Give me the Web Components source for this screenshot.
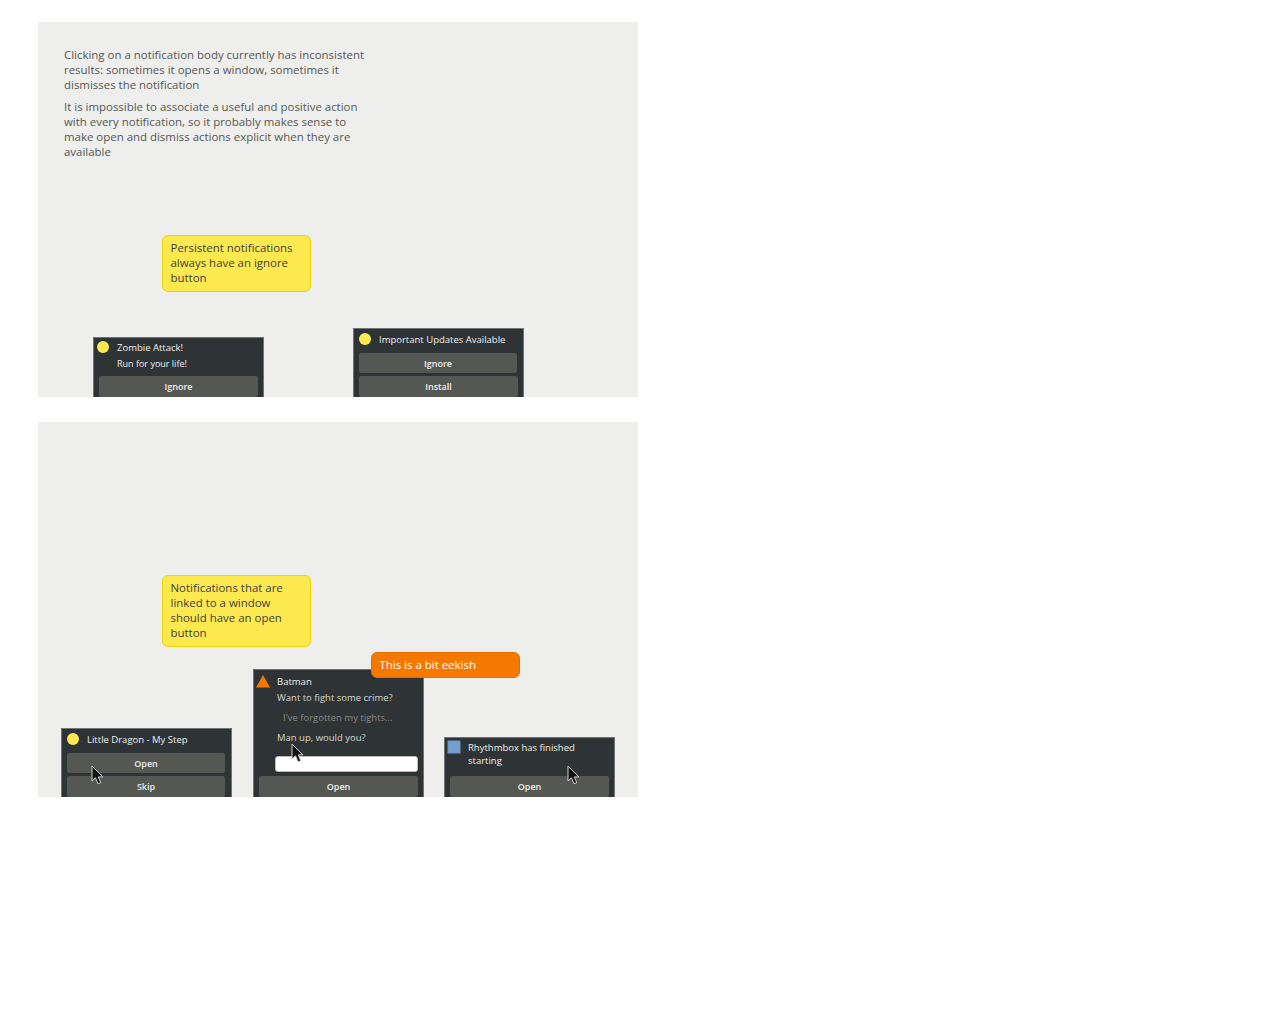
<!DOCTYPE html>
<html>
<head>
<meta charset="utf-8">
<style>
    html, body { margin: 0; background: #fff; }
    body { padding: 22px 0 0 38px; font-family: "Open Sans", "Liberation Sans", sans-serif; }
    mock-panel + mock-panel { margin-top: 25px; }
</style>
</head>
<body>
<mock-panel>
    <side-text>
        <p>Clicking on a notification body currently has inconsistent results: sometimes it opens a window, sometimes it dismisses the notification</p>
        <p>It is impossible to associate a useful and positive action with every notification, so it probably makes sense to make open and dismiss actions explicit when they are available</p>
    </side-text>
    <note-bubble style="left:124px;top:213px;height:57px">Persistent notifications always have an ignore button</note-bubble>
    <notif-card style="left:55px;top:315px;--head-top:1px;--icon-left:1px;--body-gap:2px" icon="circle" title="Zombie Attack!">
        <notif-line kind="small">Run for your life!</notif-line>
        <notif-button style="margin-right:5px">Ignore</notif-button>
    </notif-card>
    <notif-card style="left:315px;top:306px;--head-top:2px;--icon-left:3px;--body-gap:3px" icon="circle" title="Important Updates Available">
        <notif-button>Ignore</notif-button>
        <notif-button style="margin-right:5px">Install</notif-button>
    </notif-card>
</mock-panel>
<mock-panel>
    <note-bubble style="left:124px;top:153px;height:72px">Notifications that are linked to a window should have an open button</note-bubble>
    <notif-card style="left:23px;top:306px;--head-top:2px;--icon-left:3px;--body-gap:3px" icon="circle" title="Little Dragon - My Step">
        <notif-button>Open</notif-button>
        <notif-button>Skip</notif-button>
    </notif-card>
    <notif-card style="left:215px;top:247px;--head-top:3px;--icon-left:1px;--body-gap:2px" icon="triangle" title="Batman">
        <notif-line>Want to fight some crime?</notif-line>
        <notif-line kind="muted">I've forgotten my tights...</notif-line>
        <notif-line kind="gap">Man up, would you?</notif-line>
        <notif-entry></notif-entry>
        <notif-button style="margin-right:5px">Open</notif-button>
    </notif-card>
    <notif-card style="left:406px;top:315px;--head-top:1px;--icon-left:1px;--body-gap:6px" icon="square" title="Rhythmbox has finished starting">
        <notif-button style="margin-right:5px">Open</notif-button>
    </notif-card>
    <note-bubble kind="orange" style="left:333px;top:230px;height:26px">This is a bit eekish</note-bubble>
    <mouse-cursor style="left:53px;top:343px"></mouse-cursor>
    <mouse-cursor style="left:253px;top:321px"></mouse-cursor>
    <mouse-cursor style="left:529px;top:343px"></mouse-cursor>
</mock-panel>

<script>
const fontStack = '"Open Sans", "Liberation Sans", sans-serif';

function shadowHtml(el, html) {
    el.attachShadow({ mode: 'open' });
    el.shadowRoot.innerHTML = html;
}

class MockPanel extends HTMLElement {
    connectedCallback() {
        shadowHtml(this, `
            <style>
                :host { display: block; position: relative; width: 600px; height: 375px; background: #eeeeec; overflow: hidden; }
            </style>
            <slot></slot>`);
    }
}

class SideText extends HTMLElement {
    connectedCallback() {
        shadowHtml(this, `
            <style>
                :host { display: block; width: 310px; padding: 25px 0 0 26px; color: #555753; font: 11.45px/15px ${fontStack}; }
                ::slotted(p) { margin: 0 0 7px; }
            </style>
            <slot></slot>`);
    }
}

class NoteBubble extends HTMLElement {
    connectedCallback() {
        const orange = this.getAttribute('kind') === 'orange';
        shadowHtml(this, `
            <style>
                :host { display: block; position: absolute; box-sizing: border-box; width: 149px; padding: 4px 7.5px;
                    background: ${orange ? '#f57900' : '#fce94f'}; border: 1px solid ${orange ? '#e07000' : '#edd400'};
                    border-radius: 6px; color: ${orange ? '#fff' : '#3f403c'}; font: 11.45px/15px ${fontStack}; }
            </style>
            <slot></slot>`);
    }
}

class StatusIcon extends HTMLElement {
    connectedCallback() {
        const shapes = {
            circle: '<circle cx="8" cy="8" r="6" fill="#fce94f"/>',
            triangle: '<path d="M1 14.5 8 2l7 12.5z" fill="#f57900"/>',
            square: '<rect x="2" y="2" width="12" height="12" fill="#729fcf" stroke="#6a96c6"/>'
        };
        shadowHtml(this, `
            <style>:host { display: block; width: 16px; height: 16px; } svg { display: block; }</style>
            <svg width="16" height="16" viewBox="0 0 16 16">${shapes[this.getAttribute('shape')]}</svg>`);
    }
}

class NotifCard extends HTMLElement {
    connectedCallback() {
        shadowHtml(this, `
            <style>
                :host { display: block; position: absolute; box-sizing: border-box; width: 171px; padding-bottom: 20px;
                    background: #2e3436; border: 1px solid #6f7375; border-width: 1px 1px 0; color: #eeeeec; font: 9.5px/13px ${fontStack}; }
                .head { display: flex; gap: 6px; padding: var(--head-top) 4px 0 var(--icon-left); }
                .head status-icon { flex: none; }
                .title { flex: 1; padding-top: 2px; }
                .body { display: flex; flex-direction: column; padding-top: var(--body-gap); }
            </style>
            <div class="head">
                <status-icon shape="${this.getAttribute('icon')}"></status-icon>
                <div class="title">${this.getAttribute('title')}</div>
            </div>
            <div class="body"><slot></slot></div>`);
    }
}

class NotifLine extends HTMLElement {
    connectedCallback() {
        const kind = this.getAttribute('kind');
        const margins = { small: '0 0 3px 23px', muted: '7px 0 0 29px', gap: '7px 0 0 23px' };
        const color = kind === 'muted' ? '#888a85' : kind === 'small' ? '#eeeeec' : '#d3d7cf';
        shadowHtml(this, `
            <style>
                :host { display: block; margin: ${margins[kind] || '0 0 0 23px'}; color: ${color};
                    font-size: ${kind === 'small' ? '9px' : '9.5px'}; line-height: 13px; }
            </style>
            <slot></slot>`);
    }
}

class NotifButton extends HTMLElement {
    connectedCallback() {
        shadowHtml(this, `
            <style>
                :host { display: block; box-sizing: border-box; height: 20px; margin: 3px 6px 0 5px; background: #555753;
                    border-radius: 2px; color: #eeeeec; font: 600 9px/21px ${fontStack}; text-align: center; }
                :host(:last-child) { height: 21px; }
            </style>
            <slot></slot>`);
    }
}

class NotifEntry extends HTMLElement {
    connectedCallback() {
        shadowHtml(this, `
            <style>
                :host { display: block; box-sizing: border-box; height: 16px; margin: 12px 5px 1px 21px; background: #fff;
                    border: 1px solid #babdb6; border-radius: 3px; }
            </style>`);
    }
}

class MouseCursor extends HTMLElement {
    connectedCallback() {
        shadowHtml(this, `
            <style>:host { display: block; position: absolute; width: 14px; height: 21px; } svg { display: block; }</style>
            <svg width="14" height="21" viewBox="0 0 14 21">
                <path d="M1 1v15l3.500-3.200 2.500 6 2.800-1.100-2.500-5.800h4.700z" fill="#111" stroke="#d0d0d0" stroke-width="1"/>
            </svg>`);
    }
}

customElements.define('mock-panel', MockPanel);
customElements.define('side-text', SideText);
customElements.define('note-bubble', NoteBubble);
customElements.define('status-icon', StatusIcon);
customElements.define('notif-card', NotifCard);
customElements.define('notif-line', NotifLine);
customElements.define('notif-button', NotifButton);
customElements.define('notif-entry', NotifEntry);
customElements.define('mouse-cursor', MouseCursor);
</script>
</body>
</html>
